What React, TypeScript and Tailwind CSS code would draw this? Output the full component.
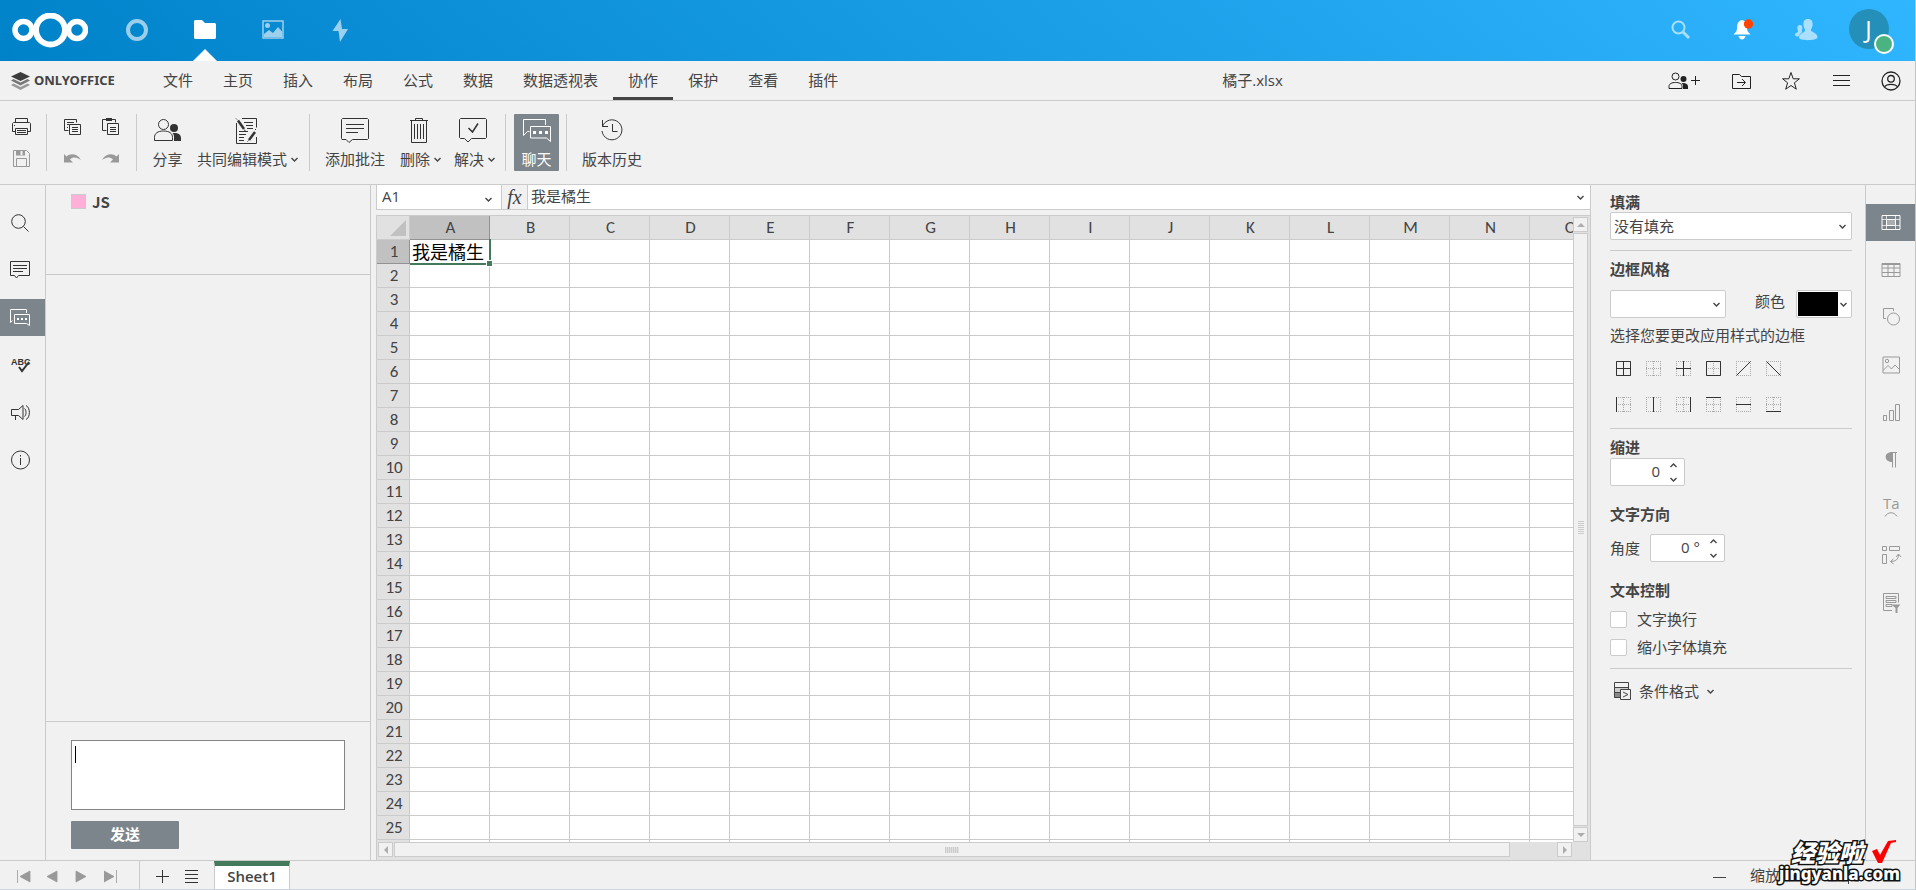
import { useState } from "react";
import type { ReactNode } from "react";

const TABS = ["文件", "主页", "插入", "布局", "公式", "数据", "数据透视表", "协作", "保护", "查看", "插件"];
const COLUMNS = "ABCDEFGHIJKLMNO".split("");
const ROWS = Array.from({ length: 25 }, (_, i) => i + 1);

type IconProps = { size?: number; className?: string; children: ReactNode };

function Icon({ size = 20, className = "", children }: IconProps) {
  return (
    <svg
      width={size}
      height={size}
      viewBox={`0 0 ${size} ${size}`}
      fill="none"
      stroke="currentColor"
      className={`overflow-visible ${className}`}
      aria-hidden="true"
    >
      {children}
    </svg>
  );
}

function Chevron({ className }: { className?: string }) {
  return (
    <svg width="9" height="9" viewBox="0 0 9 9" fill="none" stroke="#444" strokeWidth="1.4" className={className} aria-hidden="true">
      <path d="M1.5 3l3 3 3-3" />
    </svg>
  );
}

/* ---------- icons ---------- */

const icons = {
  print: (
    <Icon>
      <path d="M4.5 6.5v-4h12v4M4.5 15.5h-3v-8l1-1h16l1 1v8h-3M4.5 12.5h12v6h-12zM6 14.5h9M6 16.5h9M3 9.5h1" />
    </Icon>
  ),
  save: (
    <Icon className="text-[#999]">
      <path d="M2.5 2.5h13l3 3v13h-16zM5.5 18.5v-8h10v8" />
      <path d="M5 2.5h9v5H5z" fill="currentColor" stroke="none" />
      <path d="M10.5 3v4" stroke="#f1f1f1" strokeWidth="2" />
    </Icon>
  ),
  copy: (
    <Icon>
      <path d="M6.5 14.5h-4v-11h12v3M5 6.5h7M5 8.5h2M5 11.5h1M7.5 8.5h11v10h-11zM10 11.5h6M10 13.5h6M10 15.5h6" />
    </Icon>
  ),
  paste: (
    <Icon>
      <path d="M6.5 14.5h-4v-11h13v3M7.5 7.5h11v11h-11zM10 11.5h6M10 13.5h6M10 15.5h6" />
      <path d="M6 2h6v3H6z" fill="currentColor" stroke="none" />
    </Icon>
  ),
  undo: (
    <Icon className="text-[#999]">
      <path d="M2 6l2.500 2.500C8.500 5 15 5.500 19 12c-4-3-8-3.500-11-.5L11 14.500H2z" fill="currentColor" stroke="none" />
    </Icon>
  ),
  redo: (
    <Icon className="text-[#999]">
      <path d="M19 6l-2.500 2.500C12.500 5 6 5.500 2 12c4-3 8-3.500 11-.5L10 14.500h9z" fill="currentColor" stroke="none" />
    </Icon>
  ),
  share: (
    <Icon size={28}>
      <circle cx="9.500" cy="7.500" r="5" />
      <path d="M.5 23.500v-3c0-4 3-6.500 9-6.500s9 2.500 9 6.500v3z" />
      <circle cx="20" cy="11" r="4" fill="currentColor" stroke="none" />
      <path d="M20 24v-4c0-2-.5-3-1.500-4C24 15.500 27 17.500 27 21v3z" fill="currentColor" stroke="none" />
    </Icon>
  ),
  coedit: (
    <Icon size={28}>
      <path d="M10 1.500h14.500v9M4.500 6v20.500h20V20M12 5.500h9M14 8.500h7M15 11.500h6M7 14.500h9M7 17.500h7M7 20.500h5M7 23.500h5" />
      <path d="M6 3.500l6 8.500M23 15l-6 8" strokeWidth="2.500" />
      <path d="M4 1.500l1 1M12 13l1.500.5M24 12l-1 1M15.500 24.500l1-1" />
    </Icon>
  ),
  comment: (
    <Icon size={28}>
      <path d="M1.500 1.500h25l1 1v19l-1 1h-15l-3.500 3-3-3h-4l-.5-1v-19zM5 7.500h18M5 11.500h18M5 15.500h12" />
    </Icon>
  ),
  trash: (
    <Icon size={28}>
      <path d="M5 3.500h18M10.500 3v-1.500h7V3M6.500 3.500v22h15v-22M9.500 7v15M12.500 7v15M15.500 7v15M18.500 7v15" />
    </Icon>
  ),
  resolve: (
    <Icon size={28}>
      <path d="M1.500 1.500h25l1 1v18l-1 1h-14l-3.500 3.500-3.500-3.500h-4l-1-1v-18z" />
      <path d="M9.500 11l4 4 5.500-8.500" strokeWidth="1.500" />
    </Icon>
  ),
  chat: (
    <Icon size={28}>
      <path d="M22.500 8v-5.500h-22v16l4-4h2M7.500 9.500h20v15l-4-3.500h-16z" />
      <path d="M10 14h3v3h-3zM16 14h3v3h-3zM22 14h3v3h-3z" fill="currentColor" stroke="none" />
    </Icon>
  ),
  history: (
    <Icon size={28}>
      <path d="M4.500 9.500A10 10 0 1 1 4 14M4.500 3v6.500H10M14.500 7v7.500h5" />
    </Icon>
  ),
  search: (
    <Icon>
      <circle cx="8.500" cy="8.500" r="6.800" />
      <path d="M13.500 13.500l5 5" />
    </Icon>
  ),
  commentSmall: (
    <Icon>
      <path d="M.5 1.500h19v14h-11l-2 2.500-2-2.500h-4zM3 5.500h14M3 8.500h14M3 11.500h10" />
    </Icon>
  ),
  chatSmall: (
    <Icon>
      <path d="M16.500 5v-3.500h-16v13l2-2M4.500 6.500h15v11l-3-2h-12z" />
      <path d="M7 10h2v2H7zM11 10h2v2h-2zM15 10h2v2h-2z" fill="currentColor" stroke="none" />
    </Icon>
  ),
  spell: (
    <Icon>
      <text x="1" y="10" fontSize="9" fill="currentColor" stroke="none" className="font-['Liberation_Sans',sans-serif] font-bold">
        ABC
      </text>
      <path d="M9 12l3 4 7-9" strokeWidth="2" />
    </Icon>
  ),
  feedback: (
    <Icon>
      <path d="M1.500 6.500h7l4.500-4v14l-4.500-4h-7zM5.500 13v4M14.500 5.500c2 1.500 2 6.500 0 8M16 2.500c4.500 2 4.500 12 0 14" />
    </Icon>
  ),
  info: (
    <Icon>
      <circle cx="10.500" cy="10" r="9" />
      <path d="M10.500 8v7M10.500 5v1.500" />
    </Icon>
  ),
  cellSettings: (
    <Icon>
      <path d="M1 3.500h18v14H1z" />
      <path d="M5.500 7.500h9v6h-9z" fill="#a9aeb2" />
      <path d="M1 7.500h18M1 13.500h18M5.500 3.500v14M14.500 3.500v14" strokeWidth=".7" />
    </Icon>
  ),
  table: (
    <Icon>
      <path d="M1 3.500h18v13H1zM1 8h18M1 12.500h18M7 3.500v13M13 3.500v13M1 4.500h18" />
    </Icon>
  ),
  shape: (
    <Icon>
      <path d="M5 11.500H2.500v-10h10V4" />
      <circle cx="12.500" cy="12" r="6" />
    </Icon>
  ),
  image: (
    <Icon>
      <path d="M2 2h16.500v16H2zM2 15.500l5-5 3.500 3.500 3.500-4 4.500 4.500" />
      <circle cx="6" cy="6" r="1.700" />
    </Icon>
  ),
  chart: (
    <Icon>
      <path d="M2.500 13.500h3v5h-3zM8.500 8.500h4v10h-4zM14.500 2.500h4v16h-4z" />
    </Icon>
  ),
  paragraph: (
    <Icon>
      <path d="M11.500 3v14.500M14.500 3v14.500M10 2.500h6" />
      <path d="M11 2v10C2.500 12 2.500 2 11 2z" fill="currentColor" stroke="none" />
    </Icon>
  ),
  textArt: (
    <Icon>
      <text x="2" y="12" fontSize="15" fill="currentColor" stroke="none" className="font-['Open_Sans',sans-serif]">
        Ta
      </text>
      <path d="M4 19.500c3-5 9-5 12 0" />
    </Icon>
  ),
  pivot: (
    <Icon>
      <path d="M1.500 1.500h4v4h-4zM8.500 1.500h10v4h-10zM1.500 9.500h4v9h-4zM9.500 16.500c5 0 8-2 8-7M12.500 14l-3 2.500 3 2.500M15 12l2.500-3 2.500 3" />
    </Icon>
  ),
  slicer: (
    <Icon>
      <path d="M11 18.500H2.500v-17h15v9M5 4.500h10v2H5zM5 8.500h10v2H5zM5 12.500h6v2H5z" />
      <path d="M10.500 12.500h9L16.500 16v5h-2v-5z" fill="currentColor" stroke="none" />
    </Icon>
  ),
  usersSmall: (
    <Icon>
      <circle cx="7.500" cy="5.500" r="3.500" />
      <path d="M1 17.500v-2c0-3 3-4 6.500-4s6.500 1 6.500 4v2z" />
      <circle cx="15.500" cy="8" r="3" fill="currentColor" stroke="none" />
      <path d="M15 18v-3c0-1.500-.5-2-1.500-3 4-.5 6.500 1 6.500 3.500V18z" fill="currentColor" stroke="none" />
    </Icon>
  ),
  folderOut: (
    <Icon>
      <path d="M1.500 3.500h7l2 2h9v12h-18zM6 11.500h8M11 8l3.500 3.500L11 15" />
    </Icon>
  ),
  star: (
    <Icon>
      <path d="M10 1.500l2.200 6.300h6.200l-5 4 1.900 6.400L10 14.500l-5.300 3.700 1.900-6.400-5-4h6.200z" />
    </Icon>
  ),
  menu: (
    <Icon>
      <path d="M2 4.500h17M2 9.500h17M2 14.500h17" />
    </Icon>
  ),
  user: (
    <Icon>
      <circle cx="10" cy="10" r="9" strokeWidth="1.300" />
      <circle cx="10" cy="7.800" r="3.300" strokeWidth="1.300" />
      <path d="M3.500 16c2-3.500 11-3.500 13 0" strokeWidth="1.300" />
    </Icon>
  ),
  condFormat: (
    <Icon>
      <path d="M2 7h15v5H2z" fill="#ccc" stroke="none" />
      <path d="M2 12h6v5H2z" fill="#888" stroke="none" />
      <path d="M8.500 8.500h10v10h-10z" fill="#f1f1f1" />
      <path d="M8 16.500H2.500v-15h14v7M2.500 6.500h14M2.500 11.500h6M11 11l5 2.500-5 2.500" />
    </Icon>
  ),
};

/* ---------- top bar ---------- */

function NavItem({ label, active, children }: { label: string; active?: boolean; children: ReactNode }) {
  return (
    <a href="#" aria-label={label} className="relative flex w-[68px] items-center justify-center text-white">
      <span className={active ? "" : "opacity-60"}>{children}</span>
      {active && (
        <svg width="24" height="12" viewBox="0 0 24 12" className="absolute bottom-0 left-[22px]" aria-hidden="true">
          <path d="M0 12L12 0l12 12z" fill="#fff" />
        </svg>
      )}
    </a>
  );
}

function TopBar() {
  return (
    <header className="flex h-[61px] shrink-0 justify-between bg-[linear-gradient(40deg,#0082c9_0%,#30b6ff_100%)] pr-[15px] pl-3">
      <div className="flex">
        <a href="#" aria-label="Nextcloud" className="mr-[15px] flex items-center">
          <svg width="76" height="36" viewBox="0 0 76 36" fill="none" stroke="#fff" aria-hidden="true">
            <circle cx="38.500" cy="17" r="14.500" strokeWidth="6" />
            <circle cx="11.500" cy="17" r="8.500" strokeWidth="5.500" />
            <circle cx="65" cy="17" r="8.500" strokeWidth="5.500" />
          </svg>
        </a>
        <nav className="flex">
          <NavItem label="仪表板">
            <Icon size={22}>
              <circle cx="11" cy="10" r="9" strokeWidth="4" />
            </Icon>
          </NavItem>
          <NavItem label="文件" active>
            <Icon size={22}>
              <path d="M1 0h7l3 3h10l1 1v14l-1 1H1l-1-1V1z" fill="currentColor" stroke="none" />
            </Icon>
          </NavItem>
          <NavItem label="照片">
            <Icon size={22}>
              <path d="M1 1h20v17H1z" strokeWidth="1.500" />
              <circle cx="5.500" cy="5.500" r="2.500" fill="currentColor" stroke="none" />
              <path d="M2 17v-3l5-4 4 3 5-6 4 4.500V17z" fill="currentColor" stroke="none" />
            </Icon>
          </NavItem>
          <NavItem label="动态">
            <Icon size={22}>
              <path d="M10.500 -1L2.500 11h6L10 22 18 9h-6z" fill="currentColor" stroke="none" />
            </Icon>
          </NavItem>
        </nav>
      </div>
      <div className="flex text-white">
        <button type="button" aria-label="搜索" className="flex w-[63px] items-center justify-center opacity-60">
          <Icon>
            <circle cx="8.500" cy="6.500" r="6" strokeWidth="2" />
            <path d="M13 11l6 6" strokeWidth="3" />
          </Icon>
        </button>
        <button type="button" aria-label="通知" className="flex w-[63px] items-center justify-center">
          <Icon>
            <path d="M9-1C5 0 4 3 4 7c0 3-1 4-3.500 6.500h17C15 11 14 10 14 7c0-4-1-7-5-8zM5.500 15h7c-1 4.500-6 4.500-7 0z" fill="currentColor" stroke="none" />
            <circle cx="15.500" cy="3" r="4.700" fill="#ff4402" stroke="none" />
          </Icon>
        </button>
        <button type="button" aria-label="联系人" className="flex w-[63px] items-center justify-center opacity-60">
          <Icon size={22}>
            <path d="M13-1c4 0 5 3 4.500 6.500-.5 3-1.500 3-1.500 5 0 1.500 6.500 2 6.500 7 0 3-18 4-18.500 0 0-4 6-5 6-7 0-2-1-2-1.500-5C8 2 9-1 13-1z" fill="currentColor" stroke="none" />
            <path d="M5 5c2.500 0 3 3 1.500 6l1 1c-3 2-3 3-4 4.500-2.500 0-3.500-.5-3.500-2 0-1.500 3-1.500 3-3.500C2 8 2 5 5 5z" fill="currentColor" stroke="none" />
          </Icon>
        </button>
        <div className="flex w-[63px] items-center justify-center">
          <button type="button" aria-label="账户" className="relative mb-[3px] h-10 w-10 rounded-full bg-[#2490ba] text-2xl leading-10">
            J
            <span className="absolute -right-[5px] -bottom-[5px] h-5 w-5 rounded-full border-2 border-white bg-[#49b382]" />
          </button>
        </div>
      </div>
    </header>
  );
}

/* ---------- tabs and toolbar ---------- */

function TabBar({ tab, onTab }: { tab: string; onTab: (t: string) => void }) {
  const actions = [
    { label: "收藏目录", icon: icons.folderOut },
    { label: "收藏", icon: icons.star },
    { label: "视图设置", icon: icons.menu },
    { label: "用户", icon: icons.user },
  ];
  return (
    <div className="flex h-10 shrink-0 border-b border-[#cbcbcb]">
      <div className="flex w-[148px] items-center gap-[3px] pl-[10px] font-['Noto_Sans',sans-serif] font-bold">
        <svg width="21" height="20" viewBox="0 0 21 20" aria-hidden="true">
          <path d="M1 14l9.500 5 9.500-5-2.500-1.500-7 3.500-7-3.500z" fill="#999" />
          <path d="M1 9.500l9.500 5 9.500-5-2.500-1.500-7 3.500L3.500 8z" fill="#777" />
          <path d="M1 5.500l9.500-4.500L20 5.500l-9.500 4.500z" fill="#3c3c3c" />
        </svg>
        <span className="text-[13px]">ONLYOFFICE</span>
      </div>
      <div className="flex" role="tablist">
        {TABS.map((t) => (
          <button
            key={t}
            type="button"
            role="tab"
            aria-selected={t === tab}
            onClick={() => onTab(t)}
            className={t === tab ? "border-b-3 border-[#444] px-[15px] pt-[3px]" : "px-[15px]"}
          >
            {t}
          </button>
        ))}
      </div>
      <div className="flex flex-1 items-center justify-center pr-4">橘子.xlsx</div>
      <div className="flex items-center gap-[30px] pr-[14px] text-[#222]">
        <button type="button" aria-label="共享" className="flex items-center gap-[3px]">
          {icons.usersSmall}
          <Icon size={10}>
            <path d="M0 4.500h9M4.500 0v9" />
          </Icon>
        </button>
        {actions.map((a) => (
          <button key={a.label} type="button" aria-label={a.label}>
            {a.icon}
          </button>
        ))}
      </div>
    </div>
  );
}

function ToolButton({ label, icon, split, active }: { label: string; icon: ReactNode; split?: boolean; active?: boolean }) {
  return (
    <button
      type="button"
      className={`flex h-[57px] min-w-[45px] flex-col items-center gap-1 rounded-[1px] pt-[3px] pl-[7px] ${split ? "pr-1" : "pr-[7px]"} ${active ? "bg-[#7d858c] text-white" : ""}`}
    >
      <span className={`${split ? "mr-[5px]" : ""} ${active ? "text-white" : "text-[#333]"}`}>{icon}</span>
      <span className="flex items-center gap-[3px] leading-5">
        {label}
        {split && <Chevron />}
      </span>
    </button>
  );
}

function Separator() {
  return <div className="h-[57px] w-px bg-[#cbcbcb]" />;
}

function SmallTool({ label, icon }: { label: string; icon: ReactNode }) {
  return (
    <button type="button" aria-label={label} className="h-5 w-5 text-[#333]">
      {icon}
    </button>
  );
}

function Toolbar() {
  return (
    <div className="flex h-[84px] shrink-0 border-b border-[#cbcbcb] pt-[13px]">
      <div className="mr-[15px] ml-[11px] flex flex-col gap-3 pt-[2px]">
        <SmallTool label="打印" icon={icons.print} />
        <SmallTool label="保存" icon={icons.save} />
      </div>
      <Separator />
      <div className="mr-4 ml-[15px] grid grid-cols-2 content-start gap-x-[18px] gap-y-3 pt-[2px]">
        <SmallTool label="复制" icon={icons.copy} />
        <SmallTool label="粘贴" icon={icons.paste} />
        <SmallTool label="撤消" icon={icons.undo} />
        <SmallTool label="重做" icon={icons.redo} />
      </div>
      <Separator />
      <div className="mr-[6px] ml-2 flex">
        <ToolButton label="分享" icon={icons.share} />
        <ToolButton label="共同编辑模式" icon={icons.coedit} split />
      </div>
      <Separator />
      <div className="mr-[5px] ml-2 flex gap-px">
        <ToolButton label="添加批注" icon={icons.comment} />
        <ToolButton label="删除" icon={icons.trash} split />
        <ToolButton label="解决" icon={icons.resolve} split />
      </div>
      <Separator />
      <div className="mr-[7px] ml-2 flex">
        <ToolButton label="聊天" icon={icons.chat} active />
      </div>
      <Separator />
      <div className="ml-2 flex">
        <ToolButton label="版本历史" icon={icons.history} />
      </div>
    </div>
  );
}

/* ---------- left side ---------- */

function LeftRail() {
  const items = [
    { label: "查找", icon: icons.search },
    { label: "批注", icon: icons.commentSmall },
    { label: "聊天", icon: icons.chatSmall, active: true },
    { label: "拼写检查", icon: icons.spell },
    { label: "反馈和支持", icon: icons.feedback },
    { label: "关于", icon: icons.info },
  ];
  return (
    <div className="w-[46px] shrink-0 border-r border-[#cbcbcb] pt-[19px]">
      <div className="flex h-[275px] flex-col justify-between">
        {items.map((it) => (
          <button
            key={it.label}
            type="button"
            aria-label={it.label}
            className={`flex h-[37px] w-full items-center pl-[10px] ${it.active ? "bg-[#7d858c] text-white" : "text-[#333]"}`}
          >
            {it.icon}
          </button>
        ))}
      </div>
    </div>
  );
}

function ChatPanel() {
  const [message, setMessage] = useState("");
  return (
    <div className="flex w-[325px] shrink-0 flex-col border-r border-[#cbcbcb]">
      <div className="flex h-[90px] shrink-0 items-start gap-[6px] border-b border-[#cbcbcb] pt-[9px] pl-[25px]">
        <span className="h-[15px] w-[15px] border border-[#cbcbcb] bg-[#ffb0d9]" />
        <span className="font-['Noto_Sans_CJK_SC',sans-serif] leading-4 font-bold">JS</span>
      </div>
      <div className="flex-1" />
      <div className="shrink-0 border-t border-[#cbcbcb] px-[25px] pt-[18px] pb-[11px]">
        <div className="relative">
          <textarea
            aria-label="消息"
            value={message}
            onChange={(e) => setMessage(e.target.value)}
            className="block h-[70px] w-[274px] resize-none border border-[#848484] bg-white px-[3px] py-1 outline-none"
          />
          {message === "" && <span className="pointer-events-none absolute top-[6px] left-1 h-[17px] w-px bg-black" />}
        </div>
        <button type="button" className="mt-[11px] h-7 w-[108px] rounded-[1px] bg-[#7d858c] pb-[2px] font-bold text-white">
          发送
        </button>
      </div>
    </div>
  );
}

/* ---------- spreadsheet ---------- */

function ScrollButton({ label, path }: { label: string; path: string }) {
  return (
    <button type="button" aria-label={label} className="flex h-[15px] w-[15px] shrink-0 items-center justify-center border border-[#cbcbcb] bg-[#f1f1f1]">
      <svg width="8" height="8" viewBox="0 0 8 8" fill="#adadad" aria-hidden="true">
        <path d={path} />
      </svg>
    </button>
  );
}

function Sheet() {
  return (
    <div className="grid min-h-0 flex-1 grid-cols-[minmax(0,1fr)_17px] grid-rows-[minmax(0,1fr)_18px] border-t border-l border-[#cbcbcb] bg-[#e1e1e1]">
      <div className="overflow-hidden bg-white">
        <table className="w-[1233px] table-fixed border-separate border-spacing-0 font-['Carlito','Lato',sans-serif] text-[17px] leading-[22px]">
          <thead>
            <tr className="h-6 bg-[#e1e1e1]">
              <th className="w-[33px] border-r border-b border-[#cbcbcb] p-0">
                <svg width="16" height="16" viewBox="0 0 16 16" className="ml-[13px]" aria-hidden="true">
                  <path d="M16 0v16H0z" fill="#c1c1c1" />
                </svg>
              </th>
              {COLUMNS.map((c) => (
                <th
                  key={c}
                  scope="col"
                  className={`border-r border-b p-0 pl-[2px] font-normal ${c === "A" ? "border-[#929292] bg-[#c1c1c1]" : "border-[#cbcbcb]"}`}
                >
                  {c}
                </th>
              ))}
            </tr>
          </thead>
          <tbody>
            {ROWS.map((r) => (
              <tr key={r} className="h-6">
                <th
                  scope="row"
                  className={`border-r border-b p-0 pl-[2px] font-normal ${r === 1 ? "border-[#929292] bg-[#c1c1c1]" : "border-[#cbcbcb] bg-[#e1e1e1]"}`}
                >
                  {r}
                </th>
                {COLUMNS.map((c) => (
                  <td key={c} className="relative border-r border-b border-[#cbcbcb] p-0">
                    {r === 1 && c === "A" && (
                      <>
                        <div className="pb-[2px] pl-[2px] font-['Noto_Sans_CJK_SC',sans-serif] text-[18px] leading-5 whitespace-nowrap text-black">
                          我是橘生
                        </div>
                        <div className="absolute -top-px -right-[2px] -bottom-[2px] left-0 z-10 border-r-2 border-b-2 border-[#44795b]" />
                        <div className="absolute -right-[4px] -bottom-[4px] z-20 h-[7px] w-[7px] border border-white bg-[#44795b]" />
                      </>
                    )}
                  </td>
                ))}
              </tr>
            ))}
            <tr className="h-6">
              <th className="border-r border-[#cbcbcb] bg-[#e1e1e1]" />
              {COLUMNS.map((c) => (
                <td key={c} className="border-r border-[#cbcbcb]" />
              ))}
            </tr>
          </tbody>
        </table>
      </div>
      <div className="flex w-[15px] flex-col gap-px pt-px">
        <ScrollButton label="向上滚动" path="M0 6l4-4 4 4z" />
        <div className="flex flex-1 items-center justify-center border border-[#cbcbcb] bg-[#f1f1f1]">
          <div className="mb-1 h-[13px] w-[6px] bg-[repeating-linear-gradient(#cbcbcb_0_1px,transparent_1px_2px)]" />
        </div>
        <ScrollButton label="向下滚动" path="M0 2l4 4 4-4z" />
      </div>
      <div className="col-span-2 flex h-4 gap-px pr-[18px] pl-px">
        <ScrollButton label="向左滚动" path="M6 0L2 4l4 4z" />
        <div className="flex flex-1">
          <div className="flex h-[15px] w-[96%] items-center justify-center border border-[#cbcbcb] bg-[#f1f1f1]">
            <div className="h-[6px] w-[14px] bg-[repeating-linear-gradient(90deg,#cbcbcb_0_1px,#e1e1e1_1px_2px)]" />
          </div>
        </div>
        <ScrollButton label="向右滚动" path="M2 0l4 4-4 4z" />
      </div>
    </div>
  );
}

function Editor() {
  return (
    <main className="flex min-w-0 flex-1 flex-col border-r border-[#cbcbcb] pl-[5px]">
      <div className="mb-[5px] flex h-[25px] shrink-0 border-b border-l border-[#cbcbcb] bg-white">
        <div className="relative w-[125px] border-r border-[#cbcbcb]">
          <input aria-label="名称框" defaultValue="A1" className="h-full w-full bg-transparent px-[5px] pb-[2px] outline-none" />
          <Chevron className="absolute top-[10px] right-[8px]" />
        </div>
        <button
          type="button"
          aria-label="插入函数"
          className="w-[26px] border-r border-[#cbcbcb] bg-[#f1f1f1] font-['Liberation_Serif',serif] text-xl leading-6 italic"
        >
          fx
        </button>
        <input aria-label="编辑栏" defaultValue="我是橘生" className="min-w-0 flex-1 px-[3px] pb-[2px] outline-none" />
        <button type="button" aria-label="展开编辑栏" className="px-[5px]">
          <Chevron />
        </button>
      </div>
      <Sheet />
    </main>
  );
}

/* ---------- right side ---------- */

const BORDER_PRESETS = [
  { label: "所有框线", path: "M.5.5h14v14H.5zM7.500.5v14M.5 7.500h14" },
  { label: "无框线", path: "" },
  { label: "内部框线", path: "M7.500 0v15M0 7.500h15" },
  { label: "外侧框线", path: "M.5.5h14v14H.5z" },
  { label: "斜上框线", path: "M.5 14.500l14-14", plain: true },
  { label: "斜下框线", path: "M.5.5l14 14", plain: true },
  { label: "左框线", path: "M.5 0v15" },
  { label: "内部竖框线", path: "M7.500 0v15", plain: true },
  { label: "右框线", path: "M14.500 0v15" },
  { label: "上框线", path: "M0 .5h15" },
  { label: "内部横框线", path: "M0 7.500h15", plain: true },
  { label: "下框线", path: "M0 14.500h15" },
];

function Spinner({ id, value }: { id: string; value: string }) {
  return (
    <div className="flex h-7 w-[75px] items-center rounded-[2px] border border-[#cbcbcb] bg-white pr-[6px]">
      <input id={id} defaultValue={value} className="w-full min-w-0 pr-[9px] pb-[2px] text-right outline-none" />
      <div className="flex flex-col gap-[5px]">
        <button type="button" aria-label="增加">
          <Chevron className="block rotate-180" />
        </button>
        <button type="button" aria-label="减少">
          <Chevron className="block" />
        </button>
      </div>
    </div>
  );
}

function CellSettings() {
  return (
    <aside className="flex w-[275px] shrink-0 flex-col border-r border-[#cbcbcb] pt-[7px] pr-[13px] pl-[19px] leading-5">
      <label htmlFor="fill" className="font-bold">填满</label>
      <div className="relative">
        <select id="fill" className="block h-7 w-full appearance-none rounded-[2px] border border-[#cbcbcb] bg-white pl-[3px] outline-none">
          <option>没有填充</option>
        </select>
        <Chevron className="pointer-events-none absolute top-[10px] right-[5px]" />
      </div>
      <hr className="mt-[10px] border-[#cbcbcb]" />

      <div className="mt-2 font-bold">边框风格</div>
      <div className="mt-[11px] flex h-7 items-center">
        <div className="relative">
          <select aria-label="边框风格" className="block h-7 w-[116px] appearance-none rounded-[2px] border border-[#cbcbcb] bg-white outline-none">
            <option></option>
          </select>
          <Chevron className="pointer-events-none absolute top-[10px] right-[5px]" />
        </div>
        <span className="mb-[6px] ml-auto">颜色</span>
        <button type="button" aria-label="颜色" className="ml-[11px] flex h-7 w-14 items-center gap-px rounded-[2px] border border-[#cbcbcb] bg-white px-px">
          <span className="h-6 w-10 bg-black" />
          <Chevron />
        </button>
      </div>
      <div className="mt-[7px]">选择您要更改应用样式的边框</div>
      <div className="mt-[13px] grid grid-cols-[repeat(6,20px)] gap-x-[10px] gap-y-4 pl-[3px]">
        {BORDER_PRESETS.map((b) => (
          <button key={b.label} type="button" aria-label={b.label} className="flex h-5 items-center justify-center">
            <svg width="15" height="15" viewBox="0 0 15 15" fill="none" aria-hidden="true">
              <path d={b.plain ? "M0 .5h15M0 14.500h15M.5 0v15M14.500 0v15" : "M0 .5h15M0 14.500h15M.5 0v15M14.500 0v15M7.500 0v15M0 7.500h15"} stroke="#aaa" strokeDasharray="1 1" />
              <path d={b.path} stroke="#333" />
            </svg>
          </button>
        ))}
      </div>
      <hr className="mt-[14px] border-[#cbcbcb]" />

      <label htmlFor="indent" className="mt-2 mb-px font-bold">缩进</label>
      <Spinner id="indent" value="0" />

      <div className="mt-[18px] font-bold">文字方向</div>
      <div className="mt-[10px] flex items-center gap-[10px]">
        <label htmlFor="angle">角度</label>
        <Spinner id="angle" value="0 °" />
      </div>

      <div className="mt-[18px] font-bold">文本控制</div>
      <div className="mt-[9px] flex flex-col gap-2">
        {["文字换行", "缩小字体填充"].map((l) => (
          <label key={l} className="flex h-5 items-center gap-[10px]">
            <input type="checkbox" className="h-[17px] w-[17px] appearance-none rounded-[2px] border border-[#cbcbcb] bg-white checked:bg-[#7d858c]" />
            {l}
          </label>
        ))}
      </div>
      <hr className="mt-[11px] border-[#cbcbcb]" />

      <button type="button" className="mt-3 flex items-center self-start pl-[2px]">
        {icons.condFormat}
        <span className="mr-[7px] ml-[7px]">条件格式</span>
        <Chevron />
      </button>
    </aside>
  );
}

function RightRail() {
  const items = [
    { label: "单元格设置", icon: icons.cellSettings, active: true },
    { label: "表格设置", icon: icons.table },
    { label: "形状设置", icon: icons.shape },
    { label: "图片设置", icon: icons.image },
    { label: "图表设置", icon: icons.chart },
    { label: "段落设置", icon: icons.paragraph },
    { label: "文字艺术设置", icon: icons.textArt },
    { label: "数据透视表设置", icon: icons.pivot },
    { label: "切片器设置", icon: icons.slicer },
  ];
  return (
    <div className="w-[49px] shrink-0 pt-[19px]">
      <div className="flex h-[417px] flex-col justify-between">
        {items.map((it) => (
          <button
            key={it.label}
            type="button"
            aria-label={it.label}
            className={`flex h-[37px] items-center justify-center pb-px ${it.active ? "bg-[#7d858c] text-white" : "text-[#999]"}`}
          >
            {it.icon}
          </button>
        ))}
      </div>
    </div>
  );
}

/* ---------- status bar ---------- */

function StatusBar() {
  const nav = [
    { label: "第一张工作表", path: "M.5 0v13M13 1v11L3 6.500z" },
    { label: "上一张工作表", path: "M11 1v11L1 6.500z" },
    { label: "下一张工作表", path: "M1 1v11l10-5.500z" },
    { label: "最后一张工作表", path: "M12.500 0v13M0 1v11l10-5.500z" },
  ];
  return (
    <footer className="flex h-[30px] shrink-0 items-stretch border-t border-b border-t-[#cbcbcb] border-b-[#ccd5e3]">
      <div className="flex w-[140px] items-center gap-[15px] border-r border-[#cbcbcb] pt-[3px] pl-[17px]">
        {nav.map((n) => (
          <button key={n.label} type="button" aria-label={n.label}>
            <svg width="14" height="13" viewBox="0 0 14 13" fill="#999" stroke="#999" aria-hidden="true">
              <path d={n.path} strokeWidth=".8" />
            </svg>
          </button>
        ))}
      </div>
      <div className="flex items-center gap-4 px-4 pt-[3px] text-[#333]">
        <button type="button" aria-label="添加工作表">
          <Icon size={13}>
            <path d="M0 6.500h13M6.500 0v13" />
          </Icon>
        </button>
        <button type="button" aria-label="工作表列表">
          <Icon size={13}>
            <path d="M0 .5h13M0 4.500h13M0 8.500h13M0 12.500h13" />
          </Icon>
        </button>
      </div>
      <button type="button" className="w-[76px] border-x border-t-5 border-x-[#cbcbcb] border-t-[#44795b] bg-white pb-[3px] leading-5 font-semibold">
        Sheet1
      </button>
      <div className="ml-auto flex items-center pr-[60px]">
        <button type="button" aria-label="缩小" className="mr-6">
          <Icon size={13}>
            <path d="M0 8.500h13" />
          </Icon>
        </button>
        <span>缩放 100%</span>
        <button type="button" aria-label="放大" className="ml-5">
          <Icon size={13}>
            <path d="M0 8.500h13M6.500 2v13" />
          </Icon>
        </button>
      </div>
    </footer>
  );
}

function Watermark() {
  return (
    <div className="pointer-events-none absolute right-[15px] bottom-[6px] z-30 flex flex-col items-end text-white [paint-order:stroke] [-webkit-text-stroke:3px_#111]">
      <div className="flex items-center gap-[9px] pr-1 font-['Noto_Sans_CJK_SC',sans-serif] text-[24px] leading-[25px] font-black italic">
        经验啦
        <svg width="24" height="24" viewBox="0 0 24 24" aria-hidden="true">
          <path d="M0 11l5-2 3 6L16 1l8-1v2l-5 1-9 20H6z" fill="#f00" />
        </svg>
      </div>
      <div className="font-['Noto_Sans',sans-serif] text-[17px] leading-5 font-extrabold">jingyanla.com</div>
    </div>
  );
}

export default function App() {
  const [tab, setTab] = useState("协作");

  return (
    <div className="relative flex h-screen flex-col overflow-hidden border-r border-[#c4c4c4] bg-[#f1f1f1] font-['Open_Sans','Noto_Sans_CJK_SC',sans-serif] text-[15px] text-[#444]">
      <TopBar />
      <TabBar tab={tab} onTab={setTab} />
      <Toolbar />
      <div className="flex min-h-0 flex-1">
        <LeftRail />
        <ChatPanel />
        <Editor />
        <CellSettings />
        <RightRail />
      </div>
      <StatusBar />
      <Watermark />
    </div>
  );
}
